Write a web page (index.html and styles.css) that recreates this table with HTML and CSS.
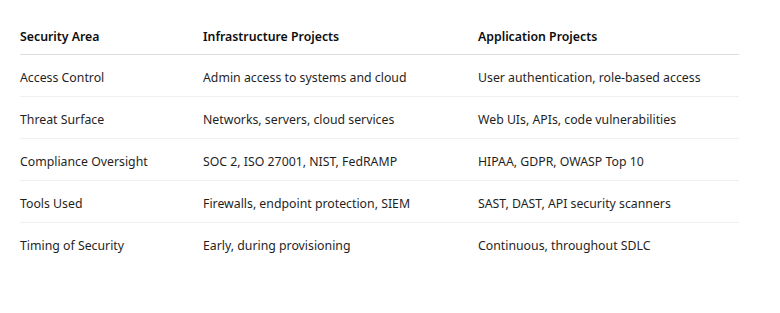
FILE: index.html
```html
<!DOCTYPE html>
<html lang="en">
<head>
    <meta charset="UTF-8">
    <title>Security Comparison</title>
    <link rel="stylesheet" href="styles.css">
</head>
<body>
    <table class="compare">
        <thead>
            <tr>
                <th class="col-area">Security Area</th>
                <th class="col-infra">Infrastructure Projects</th>
                <th class="col-app">Application Projects</th>
            </tr>
        </thead>
        <tbody>
            <tr>
                <td>Access Control</td>
                <td>Admin access to systems and cloud</td>
                <td>User authentication, role-based access</td>
            </tr>
            <tr>
                <td>Threat Surface</td>
                <td>Networks, servers, cloud services</td>
                <td>Web UIs, APIs, code vulnerabilities</td>
            </tr>
            <tr>
                <td>Compliance Oversight</td>
                <td>SOC 2, ISO 27001, NIST, FedRAMP</td>
                <td>HIPAA, GDPR, OWASP Top 10</td>
            </tr>
            <tr>
                <td>Tools Used</td>
                <td>Firewalls, endpoint protection, SIEM</td>
                <td>SAST, DAST, API security scanners</td>
            </tr>
            <tr>
                <td>Timing of Security</td>
                <td>Early, during provisioning</td>
                <td>Continuous, throughout SDLC</td>
            </tr>
        </tbody>
    </table>
</body>
</html>
```

FILE: styles.css
```css
body {
    margin: 0;
    padding: 12px 41px 0 20px;
    background-color: #ffffff;
    font-family: "Noto Sans", "Open Sans", sans-serif;
    font-size: 12.3px;
    color: #1f1f1f;
}
.compare {
    width: 719px;
    border-collapse: collapse;
    table-layout: fixed;
}
.compare th,
.compare td {
    height: 37px;
    padding: 4px 0 0;
    text-align: left;
    vertical-align: middle;
    white-space: nowrap;
}
.compare th {
    height: 36px;
    padding-top: 6px;
    font-weight: 600;
    color: #0d0d0d;
    border-bottom: 1px solid #dedede;
}
.compare td {
    border-bottom: 1px solid #f0f0f0;
}
.compare tbody tr:last-child td {
    border-bottom: none;
}
.col-area {
    width: 183px;
}
.col-infra {
    width: 275px;
}
```
